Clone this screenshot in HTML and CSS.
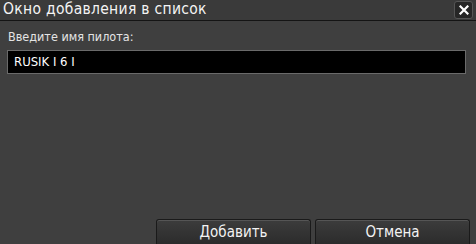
FILE: index.html
```html
<!DOCTYPE html>
<html lang="ru">
<head>
<meta charset="utf-8">
<link rel="stylesheet" href="styles.css">
</head>
<body>
<div class="dialog">
  <div class="titlebar">
    <span class="title">Окно добавления в список</span>
    <span class="close">
      <svg width="10" height="10" viewBox="0 0 10 10"><path d="M1.5 1.5 L8.5 8.5 M8.5 1.5 L1.5 8.5" stroke="#fff" stroke-width="2.2" stroke-linecap="square"/></svg>
    </span>
  </div>
  <div class="content">
    <div class="label">Введите имя пилота:</div>
    <div class="input">RUSIK I 6 I</div>
    <div class="spacer"></div>
    <div class="buttons">
      <div class="btn">Добавить</div>
      <div class="btn">Отмена</div>
    </div>
  </div>
</div>
</body>
</html>
```
FILE: styles.css
```css
html, body {
  margin: 0;
  padding: 0;
  background: #3e3e3e;
}
.dialog {
  width: 476px;
  height: 244px;
  display: flex;
  flex-direction: column;
  background: #3f3f3f;
  font-family: "DejaVu Sans Condensed", "DejaVu Sans", sans-serif;
  color: #f0f0f0;
  overflow: hidden;
}
.titlebar {
  height: 20px;
  flex: none;
  display: flex;
  justify-content: space-between;
  align-items: flex-start;
  background: #3a3a3a;
  border-bottom: 1px solid #141414;
  padding: 0 3px 0 3px;
}
.title {
  font-size: 15.5px;
  line-height: 18px;
  color: #f4f4f4;
  letter-spacing: 0.3px;
}
.close {
  width: 17px;
  height: 16px;
  margin-top: 1px;
  border-radius: 3px;
  background: #262626;
  border: 1px solid #555;
  display: flex;
  align-items: center;
  justify-content: center;
}
.content {
  flex: 1;
  display: flex;
  flex-direction: column;
  padding: 8px 10px 0 7px;
}
.label {
  font-size: 12.5px;
  line-height: 16px;
  color: #e4e4e4;
  padding-left: 1px;
}
.input {
  margin-top: 5px;
  height: 22px;
  background: #000;
  border: 1px solid #6a6a6a;
  font-size: 13px;
  line-height: 22px;
  padding-left: 6px;
  color: #fff;
}
.spacer {
  flex: 1;
}
.buttons {
  display: flex;
  justify-content: flex-end;
  gap: 4px;
  margin-right: -4px;
}
.btn {
  width: 153px;
  height: 24px;
  border: 1px solid #1a1a1a;
  border-bottom: none;
  border-radius: 3px 3px 0 0;
  background: linear-gradient(#3c3c3c, #2c2c2c);
  box-shadow: inset 0 1px 0 #555;
  text-align: center;
  font-size: 15px;
  line-height: 25px;
  color: #f2f2f2;
}
```
